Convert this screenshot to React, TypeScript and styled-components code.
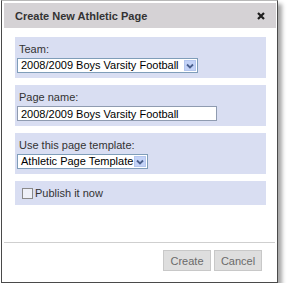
import styled, { createGlobalStyle } from "styled-components";

const GlobalStyle = createGlobalStyle`
  html, body {
    margin: 0;
    padding: 0;
    background: #ffffff;
  }
  body {
    font-family: "Liberation Sans", Arial, sans-serif;
    font-size: 11px;
    color: #333333;
  }
`;

const ChevronIcon = () => (
  <svg width="8" height="6" viewBox="0 0 8 6">
    <path d="M1 1.5 L4 4.5 L7 1.5" fill="none" stroke="#4a5f8c" strokeWidth="1.8" />
  </svg>
);

const CloseIcon = () => (
  <svg width="8" height="8" viewBox="0 0 8 8">
    <path d="M1 1 L7 7 M7 1 L1 7" stroke="#1e1e1e" strokeWidth="2.2" />
  </svg>
);

const App = () => {
  return (
    <>
      <GlobalStyle />
      <Page>
        <Dialog>
          <TitleBar>
            <Title>Create New Athletic Page</Title>
            <CloseButton>
              <CloseIcon />
            </CloseButton>
          </TitleBar>
          <Content>
            <Panel>
              <Label>Team:</Label>
              <Select width={181}>
                <SelectText>2008/2009 Boys Varsity Football</SelectText>
                <ArrowButton>
                  <ChevronIcon />
                </ArrowButton>
              </Select>
            </Panel>
            <Panel>
              <Label>Page name:</Label>
              <TextInput defaultValue="2008/2009 Boys Varsity Football" />
            </Panel>
            <Panel>
              <Label>Use this page template:</Label>
              <Select width={131}>
                <SelectText>Athletic Page Template</SelectText>
                <ArrowButton>
                  <ChevronIcon />
                </ArrowButton>
              </Select>
            </Panel>
            <CheckPanel>
              <CheckBox />
              <span>Publish it now</span>
            </CheckPanel>
          </Content>
          <Footer>
            <FooterButton>Create</FooterButton>
            <FooterButton>Cancel</FooterButton>
          </Footer>
        </Dialog>
      </Page>
    </>
  );
};

export default App;

const Page = styled.div`
  padding-left: 1px;
`;

const Dialog = styled.div`
  width: 277px;
  height: 283px;
  box-sizing: border-box;
  border: 1px solid #4a4a4a;
  border-top-color: #b8b8b8;
  background: #ffffff;
  padding: 2px 1px 0 2px;
  display: flex;
  flex-direction: column;
  box-shadow: 4px 4px 4px rgba(0, 0, 0, 0.35);
`;

const TitleBar = styled.div`
  height: 25px;
  background: #d5d2d5;
  display: flex;
  align-items: center;
  justify-content: space-between;
  padding: 1px 11px 0 11px;
  box-sizing: border-box;
`;

const Title = styled.span`
  font-weight: bold;
  font-size: 11px;
  color: #333333;
`;

const CloseButton = styled.span`
  display: flex;
  align-items: center;
`;

const Content = styled.div`
  display: flex;
  flex-direction: column;
  gap: 7px;
  padding: 9px 10px 0 11px;
`;

const Panel = styled.div`
  background: #d9def2;
  height: 41px;
  box-sizing: border-box;
  padding: 5px 2px 0 2px;
  display: flex;
  flex-direction: column;
  gap: 2px;
`;

const Label = styled.div`
  padding-left: 2px;
  line-height: 14px;
  color: #333333;
`;

const Select = styled.div<{ width: number }>`
  width: ${(p) => p.width}px;
  height: 15px;
  box-sizing: border-box;
  border: 1px solid #7f9db9;
  background: #ffffff;
  display: flex;
  align-items: center;
  justify-content: space-between;
  padding: 0 1px 0 3px;
`;

const SelectText = styled.span`
  color: #000000;
  line-height: 13px;
`;

const ArrowButton = styled.span`
  width: 12px;
  height: 11px;
  box-sizing: border-box;
  background: #c3d2f7;
  border: 1px solid #b4c6ee;
  display: flex;
  align-items: center;
  justify-content: center;
`;

const TextInput = styled.input`
  width: 200px;
  height: 15px;
  box-sizing: border-box;
  border: 1px solid #8f9bb0;
  background: #ffffff;
  margin: 0;
  padding: 0 3px;
  font-family: "Liberation Sans", Arial, sans-serif;
  font-size: 11px;
  color: #000000;
  outline: none;
`;

const CheckPanel = styled.div`
  background: #d9def2;
  height: 24px;
  display: flex;
  align-items: center;
  gap: 2px;
  padding-left: 7px;
  color: #333333;
`;

const CheckBox = styled.span`
  width: 11px;
  height: 11px;
  box-sizing: border-box;
  border: 1px solid #8a8a8a;
  background: #eef0f8;
`;

const Footer = styled.div`
  margin-top: 37px;
  border-top: 1px solid #cfcfcf;
  margin-right: 1px;
  display: flex;
  justify-content: flex-end;
  gap: 3px;
  padding: 7px 13px 0 0;
`;

const FooterButton = styled.button`
  height: 21px;
  width: 48px;
  box-sizing: border-box;
  border: 1px solid #c8c8c8;
  background: #dedede;
  color: #6a6a6a;
  font-family: "Liberation Sans", Arial, sans-serif;
  font-size: 11px;
  padding: 0;
`;
